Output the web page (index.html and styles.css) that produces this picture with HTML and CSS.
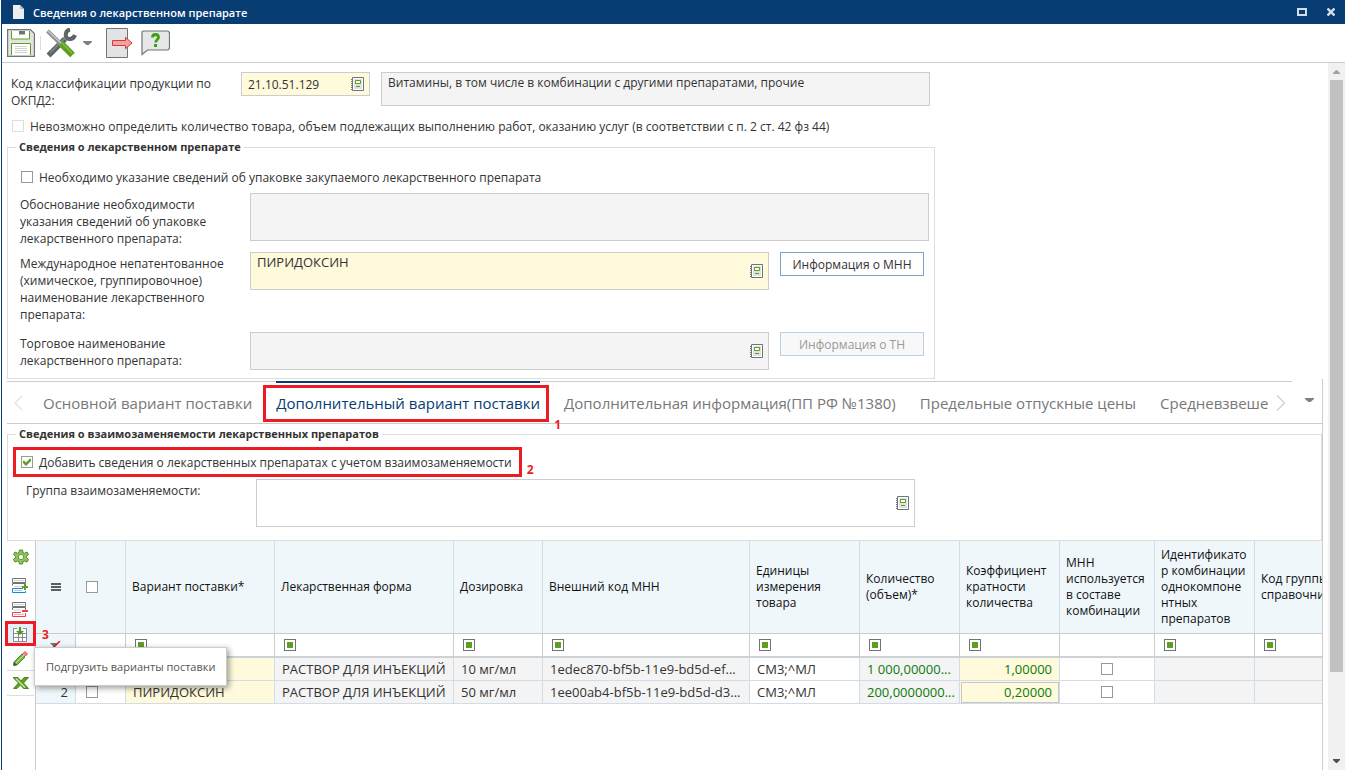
FILE: index.html
```
<!DOCTYPE html>
<html lang="ru">
<head>
    <meta charset="UTF-8">
    <meta name="viewport" content="width=device-width, initial-scale=1.0">
    <title>Сведения о лекарственном препарате</title>
    <link rel="stylesheet" href="styles.css">
</head>
<body>
    <!-- Общие иконки -->
    <svg class="sprite" aria-hidden="true">
        <symbol id="icon-book" viewBox="0 0 13 14">
            <path d="M1.500 .5h11v13h-11z" fill="#fff" stroke="#6f7477"/>
            <path d="M3 2h8v10H3z" fill="#dfe1e2"/>
            <path d="M4.500 3.500h5v3h-5z" fill="#fff" stroke="#5f9f20"/>
            <path d="M5 9.500h4" stroke="#5f9f20"/>
            <path d="M0 2.500h1M0 4.500h1M0 6.500h1M0 8.500h1M0 10.500h1M0 12.500h1" stroke="#6f7477"/>
        </symbol>
        <symbol id="icon-caret" viewBox="0 0 9 4">
            <path d="M0 0h9v1L5.500 4h-2L0 1z" fill="#7d7f81"/>
        </symbol>
    </svg>

    <div class="window">
        <header class="title-bar">
            <svg class="title-icon" width="11" height="14" viewBox="0 0 11 14"><path d="M0 0h7l4 4v10H0z" fill="#eceef0"/><path d="M7 0v4h4z" fill="#b4bcc4"/></svg>
            <h1>Сведения о лекарственном препарате</h1>
            <button class="title-button" type="button" aria-label="Развернуть"><svg width="10" height="8" viewBox="0 0 10 8"><path d="M1 1h8v6H1z" fill="none" stroke="#d3dde7" stroke-width="2"/></svg></button>
            <button class="title-button" type="button" aria-label="Закрыть"><svg width="8" height="8" viewBox="0 0 8 8"><path d="M.5 .5l7 7M7.500 .5l-7 7" stroke="#d3dde7" stroke-width="2.400"/></svg></button>
        </header>

        <div class="toolbar">
            <button type="button" aria-label="Сохранить">
                <svg width="28" height="28" viewBox="0 0 28 28">
                    <path d="M.6 .6h22.800l4 4v22.800H.6z" fill="#e2e3e4" stroke="#6f7477" stroke-width="1.200"/>
                    <path d="M4.500 2v8h18V2" fill="#fff" stroke="#5f9f20"/>
                    <path d="M12 2h6v3.500h-6z" fill="#6f7477"/>
                    <path d="M4.500 26V14.500h19V26" fill="#fff" stroke="#5f9f20"/>
                    <path d="M8 17.500h12M8 19.500h12M8 21.500h12M8 23.500h12" stroke="#cfd1d2"/>
                </svg>
            </button>
            <span class="toolbar-separator"></span>
            <button class="tools-button" type="button" aria-label="Операции">
                <svg width="31" height="30" viewBox="0 0 31 30" fill="none">
                    <path d="M2.500 27.500L19 11" stroke="#5f6466" stroke-width="5.500"/>
                    <path d="M24 1.500c-5 1-6 9-1 9.500 3 .3 5-1 6-4" stroke="#5f6466" stroke-width="4"/>
                    <path d="M4 25L19 10" stroke="#84888a" stroke-width="1.500"/>
                    <path d="M1.500 3L16 17" stroke="#8c9092" stroke-width="4"/>
                    <path d="M2 3L15 15" stroke="#c5c8c9" stroke-width="1.500"/>
                    <path d="M15 15.500L26.500 27" stroke="#5f9f20" stroke-width="6.500"/>
                    <path d="M16 15l10 10" stroke="#83bd48" stroke-width="1.500"/>
                </svg>
                <svg width="9" height="4"><use href="#icon-caret"/></svg>
            </button>
            <button type="button" aria-label="Выход">
                <svg width="27" height="30" viewBox="0 0 27 30">
                    <path d="M.5 .5h21v29H.5z" fill="#e2e3e4" stroke="#6f7477"/>
                    <path d="M6.500 12.500h13V9.300L26 15l-6.500 5.700v-3.200h-13z" fill="#f4a1a1" stroke="#d5393c"/>
                </svg>
            </button>
            <button type="button" aria-label="Справка">
                <svg width="29" height="26" viewBox="0 0 29 26">
                    <path d="M2 1h25l1.500 1.500v16L27 20H6.500L1 24.500V2z" fill="#e6e7e8" stroke="#6f7477" stroke-width="1.200"/>
                    <path d="M11.500 7.500c0-4 6-4 6 0 0 2-2.800 2-2.800 5" fill="none" stroke="#3fa012" stroke-width="2.800"/>
                    <path d="M13 14h3v3h-3z" fill="#3fa012"/>
                </svg>
            </button>
        </div>

        <div class="body">
            <main class="content">
                <div class="okpd-row">
                    <label class="form-label" for="okpd">Код классификации продукции по ОКПД2:</label>
                    <div class="field field-required okpd-code">
                        <input type="text" id="okpd" value="21.10.51.129">
                        <button class="lookup" type="button" aria-label="Выбрать код"><svg width="13" height="14"><use href="#icon-book"/></svg></button>
                    </div>
                    <textarea class="field field-readonly okpd-name" aria-label="Наименование ОКПД2" readonly>Витамины, в том числе в комбинации с другими препаратами, прочие</textarea>
                </div>

                <label class="check-row check-disabled"><input type="checkbox" disabled>Невозможно определить количество товара, объем подлежащих выполнению работ, оказанию услуг (в соответствии с п. 2 ст. 42 фз 44)</label>

                <fieldset class="drug">
                    <legend>Сведения о лекарственном препарате</legend>
                    <label class="check-row"><input type="checkbox">Необходимо указание сведений об упаковке закупаемого лекарственного препарата</label>
                    <div class="form-row">
                        <label class="form-label" for="reason">Обоснование необходимости указания сведений об упаковке лекарственного препарата:</label>
                        <textarea class="field field-readonly tall" id="reason" readonly></textarea>
                    </div>
                    <div class="form-row">
                        <label class="form-label" for="mnn">Международное непатентованное (химическое, группировочное) наименование лекарственного препарата:</label>
                        <div class="field field-required">
                            <textarea class="value" id="mnn">ПИРИДОКСИН</textarea>
                            <button class="lookup" type="button" aria-label="Выбрать МНН"><svg width="13" height="14"><use href="#icon-book"/></svg></button>
                        </div>
                        <button class="info-button" type="button">Информация о МНН</button>
                    </div>
                    <div class="form-row">
                        <label class="form-label" for="trade">Торговое наименование лекарственного препарата:</label>
                        <div class="field field-readonly">
                            <textarea class="value" id="trade" readonly></textarea>
                            <button class="lookup" type="button" aria-label="Выбрать ТН"><svg width="13" height="14"><use href="#icon-book"/></svg></button>
                        </div>
                        <button class="info-button" type="button" disabled>Информация о ТН</button>
                    </div>
                </fieldset>

                <section class="tab-panel">
                    <nav class="tabs">
                        <div class="tabs-scroller">
                            <button class="tab-arrow" type="button" aria-label="Назад"><svg width="10" height="16" viewBox="0 0 10 16"><path d="M8.500 .5L1 8l7.500 7.500" fill="none" stroke="#e3e3e3" stroke-width="1.300"/></svg></button>
                            <div class="tab-list">
                                <a href="#main">Основной вариант поставки</a>
                                <a class="active" href="#extra">Дополнительный вариант поставки<span class="mark">1</span></a>
                                <a href="#info">Дополнительная информация(ПП РФ №1380)</a>
                                <a href="#limit">Предельные отпускные цены</a>
                                <a href="#average">Средневзвешенные цены</a>
                            </div>
                            <button class="tab-arrow" type="button" aria-label="Вперед"><svg width="10" height="16" viewBox="0 0 10 16"><path d="M1 .5L8.500 8 1 15.500" fill="none" stroke="#cfcfcf" stroke-width="1.300"/></svg></button>
                        </div>
                        <button class="tab-menu" type="button" aria-label="Все вкладки"><svg width="9" height="4"><use href="#icon-caret"/></svg></button>
                    </nav>

                    <fieldset class="replace">
                        <legend>Сведения о взаимозаменяемости лекарственных препаратов</legend>
                        <label class="check-row marked"><input type="checkbox" checked>Добавить сведения о лекарственных препаратах с учетом взаимозаменяемости<span class="mark">2</span></label>
                        <div class="form-row">
                            <label class="form-label" for="group">Группа взаимозаменяемости:</label>
                            <div class="field tall">
                                <textarea id="group"></textarea>
                                <button class="lookup" type="button" aria-label="Выбрать группу"><svg width="13" height="14"><use href="#icon-book"/></svg></button>
                            </div>
                        </div>
                    </fieldset>

                    <div class="grid">
                        <div class="side-bar">
                            <button class="settings" type="button" aria-label="Настройки">
                                <svg width="16" height="16" viewBox="0 0 16 16"><path d="M6.500 1h3l.5 2.500 1.500.7L14 3l1.500 2.500L13.500 7.300v1.400l2 1.800L14 13l-2.500-1-1.500.7-.5 2.300h-3L6 12.700 4.500 12 2 13 .5 10.500l2-1.800V7.300l-2-1.800L2 3l2.500 1.200L6 3.500z" fill="#8fc163" stroke="#4f9022"/><circle cx="8" cy="8" r="2.700" fill="#fff" stroke="#5f9f20"/></svg>
                            </button>
                            <button type="button" aria-label="Добавить строку">
                                <svg width="17" height="16" viewBox="0 0 17 16"><path d="M.5 .5h13v4H.5zM.5 7.500v-2h13v2" fill="#fff" stroke="#6f7477"/><path d="M2 2.500h10M2 8.500h8" stroke="#cfd1d2"/><path d="M11 10.500H.5v4h13V13" fill="#fff" stroke="#1f87d0"/><path d="M2 12.500h8" stroke="#9dccf0"/><path d="M10 9h6M13 6v6" stroke="#5f9f20" stroke-width="2"/></svg>
                            </button>
                            <button type="button" aria-label="Удалить строку">
                                <svg width="17" height="16" viewBox="0 0 17 16"><path d="M.5 .5h13v4H.5zM.5 8v-2.500h13V8" fill="#fff" stroke="#6f7477"/><path d="M2 2.500h10M2 8h7" stroke="#cfd1d2"/><path d="M9 10.500H.5v4h13V11" fill="#fff" stroke="#ee4050"/><path d="M2 12.500h10" stroke="#f7a9b0"/><path d="M10 9h6" stroke="#ee4050" stroke-width="2"/></svg>
                            </button>
                            <button class="load" type="button" aria-label="Подгрузить">
                                <svg width="15" height="15" viewBox="0 0 15 15"><path d="M.5 1.500h13v13H.5zM.5 6.500h13M.5 10.500h13M5.500 6v8M9.500 6v8" fill="#fff" stroke="#858a8d"/><path d="M4 0h6v5H4z" fill="#e6eef8"/><path d="M7 0v6" stroke="#4f9a14" stroke-width="2"/><path d="M3 4l4 4 4-4z" fill="#4f9a14"/></svg>
                                <span class="mark">3</span>
                                <span class="tooltip" role="tooltip">Подгрузить варианты поставки</span>
                            </button>
                            <button class="group-end" type="button" aria-label="Изменить">
                                <svg width="15" height="15" viewBox="0 0 15 15"><path d="M1 11l8-8 3 3-8 8-3.500.5z" fill="#7fb84a" stroke="#4d8a1d"/><path d="M.5 14.500l.5-3.500 3 3z" fill="#4b4f51"/><path d="M3 12l8-8" stroke="#c3e29f"/><path d="M10 2.500l2-2 2.500 2.500-2 2z" fill="#ef8d93" stroke="#dc4b52"/></svg>
                            </button>
                            <button class="group-end" type="button" aria-label="Экспорт в Excel">
                                <svg width="16" height="12" viewBox="0 0 16 12"><path d="M0 .5h5l3 3.500 3-3.500h4.500L10.500 6l5 5.500h-5L7.500 8l-3.500 3.500H.5L5.500 6z" fill="#5f9f20" stroke="#4d8a1d"/><path d="M3 1.500l9 9" stroke="#c6e6a5" stroke-width="1.500"/></svg>
                            </button>
                        </div>

                        <div class="table-wrap">
                            <table>
                                <colgroup>
                                    <col class="c-num"><col class="c-check"><col class="c-variant"><col class="c-form"><col class="c-dose"><col class="c-code"><col class="c-unit"><col class="c-std"><col class="c-std"><col class="c-used"><col class="c-std"><col class="c-std">
                                </colgroup>
                                <thead>
                                    <tr>
                                        <th class="center"><svg width="10" height="8" viewBox="0 0 10 8"><path d="M0 1h10M0 4h10M0 7h10" stroke="#5b5f61" stroke-width="2"/></svg></th>
                                        <th class="pick"><input type="checkbox" aria-label="Выбрать все"></th>
                                        <th>Вариант поставки*</th>
                                        <th>Лекарственная форма</th>
                                        <th>Дозировка</th>
                                        <th>Внешний код МНН</th>
                                        <th>Единицы измерения товара</th>
                                        <th>Количество (объем)*</th>
                                        <th>Коэффициент кратности количества</th>
                                        <th>МНН используется в составе комбинации</th>
                                        <th>Идентификатор комбинации однокомпонентных препаратов</th>
                                        <th>Код группы справочника</th>
                                    </tr>
                                    <tr class="filters">
                                        <td class="num center"><svg width="11" height="9" viewBox="0 0 11 9"><path d="M0 2h8L5 5v4H3V5z" fill="#6f7477"/><path d="M10 0L2 8" stroke="#e8141c" stroke-width="1.500"/></svg></td>
                                        <td></td>
                                        <td><button type="button" aria-label="Фильтр"></button></td>
                                        <td><button type="button" aria-label="Фильтр"></button></td>
                                        <td><button type="button" aria-label="Фильтр"></button></td>
                                        <td><button type="button" aria-label="Фильтр"></button></td>
                                        <td><button type="button" aria-label="Фильтр"></button></td>
                                        <td><button type="button" aria-label="Фильтр"></button></td>
                                        <td><button type="button" aria-label="Фильтр"></button></td>
                                        <td></td>
                                        <td><button type="button" aria-label="Фильтр"></button></td>
                                        <td><button type="button" aria-label="Фильтр"></button></td>
                                    </tr>
                                </thead>
                                <tbody>
                                    <tr>
                                        <td class="num"></td>
                                        <td class="pick"></td>
                                        <td class="edit"></td>
                                        <td class="locked">РАСТВОР ДЛЯ ИНЪЕКЦИЙ</td>
                                        <td class="locked">10 мг/мл</td>
                                        <td class="locked">1edec870-bf5b-11e9-bd5d-ef...</td>
                                        <td>СМ3;^МЛ</td>
                                        <td class="locked green">1 000,00000...</td>
                                        <td class="edit green right">1,00000</td>
                                        <td class="center"><input type="checkbox" aria-label="МНН в составе комбинации"></td>
                                        <td class="locked"></td>
                                        <td class="locked"></td>
                                    </tr>
                                    <tr>
                                        <td class="num">2</td>
                                        <td class="pick"><input type="checkbox" aria-label="Выбрать строку"></td>
                                        <td class="edit">ПИРИДОКСИН</td>
                                        <td class="locked">РАСТВОР ДЛЯ ИНЪЕКЦИЙ</td>
                                        <td class="locked">50 мг/мл</td>
                                        <td class="locked">1ee00ab4-bf5b-11e9-bd5d-d3...</td>
                                        <td>СМ3;^МЛ</td>
                                        <td class="locked green">200,0000000...</td>
                                        <td class="edit green right current">0,20000</td>
                                        <td class="center"><input type="checkbox" aria-label="МНН в составе комбинации"></td>
                                        <td class="locked"></td>
                                        <td class="locked"></td>
                                    </tr>
                                </tbody>
                            </table>
                        </div>
                    </div>
                </section>
            </main>

            <div class="scrollbar">
                <svg width="7" height="4" viewBox="0 0 7 4"><path d="M0 4v-1L3 0h1l3 3v1z" fill="#a3a3a3"/></svg>
                <div class="scroll-track"><div class="scroll-thumb"></div></div>
                <svg width="7" height="4" viewBox="0 0 7 4"><path d="M0 0v1l3 3h1l3-3V0z" fill="#505050"/></svg>
            </div>
        </div>
    </div>
</body>
</html>
```
FILE: styles.css
```
* {
    box-sizing: border-box;
}

body {
    margin: 0;
    font-family: "Open Sans", "Noto Sans", sans-serif;
    font-size: 12px;
    line-height: 17px;
    color: #333;
    background-color: #fff;
}

button,
input,
textarea {
    font: inherit;
    color: inherit;
}

button {
    padding: 0;
    border: 0;
    background: none;
    cursor: pointer;
}

svg {
    display: block;
}

.sprite {
    display: none;
}

.window {
    display: flex;
    flex-direction: column;
    height: 100vh;
    border-left: 1px solid #083d73;
    margin-left: 1px;
    overflow: hidden;
}

/* Title bar */
.title-bar {
    display: flex;
    align-items: center;
    height: 24px;
    flex: none;
    padding: 0 10px 0 11px;
    background-color: #083d73;
    color: #fff;
}

.title-bar h1 {
    flex: 1;
    margin: 0 0 0 9px;
    font-size: 11px;
    font-weight: 600;
}

.title-button {
    margin-left: 20px;
}

/* Toolbar */
.toolbar {
    display: flex;
    align-items: center;
    flex: none;
    height: 39px;
    padding: 0 5px;
    border-bottom: 1px solid #ccc;
}

.toolbar-separator {
    width: 1px;
    height: 14px;
    margin: 0 5px;
    background-color: #ddd;
}

.tools-button {
    display: flex;
    align-items: center;
    gap: 6px;
    margin-right: 14px;
}

.toolbar button:last-child {
    margin-left: 8px;
}

/* Body */
.body {
    display: flex;
    flex: 1;
    min-height: 0;
}

.content {
    display: flex;
    flex-direction: column;
    flex: 1;
    min-width: 0;
    padding: 9px 5px 0;
    overflow: hidden;
}

.form-label {
    flex: none;
    width: 230px;
    padding: 3px 12px 0 0;
}

.field {
    display: flex;
    align-items: center;
    margin: 0;
    border: 1px solid #ccc;
    border-radius: 0;
    background-color: #fff;
    resize: none;
}

.field input,
.field textarea {
    flex: 1;
    min-width: 0;
    align-self: stretch;
    border: 0;
    background: none;
    outline: none;
    resize: none;
}

.field input,
.field textarea,
textarea.field {
    padding: 1px 6px;
    overflow: hidden;
}

.field .value {
    font-size: 13px;
}

.field-required {
    background-color: #fffadb;
}

.field-readonly {
    background-color: #f4f4f4;
}

.tall {
    height: 48px;
}

.lookup {
    flex: none;
    padding: 0 5px;
}

.okpd-row {
    display: flex;
    align-items: flex-start;
    max-width: 923px;
    padding-left: 4px;
}

.okpd-code {
    width: 129px;
    height: 24px;
    margin-right: 11px;
}

.okpd-name {
    flex: 1;
    height: 34px;
}

.check-row {
    position: relative;
    display: flex;
    align-items: center;
    gap: 6px;
    width: fit-content;
    height: 18px;
}

.check-disabled {
    margin: 8px 0 4px 5px;
}

input[type="checkbox"] {
    appearance: none;
    flex: none;
    display: block;
    width: 12px;
    height: 12px;
    margin: 0;
    border: 1px solid #999;
    background-color: #fff;
}

input[type="checkbox"]:disabled {
    border-color: #ddd;
}

input[type="checkbox"]:checked::before {
    content: "";
    display: block;
    width: 10px;
    height: 10px;
    background-color: #5f9f20;
    clip-path: polygon(10% 40%, 20% 35%, 40% 55%, 80% 15%, 90% 20%, 90% 40%, 40% 90%, 10% 60%);
}

/* Fieldsets */
fieldset {
    min-width: 0;
    margin: 0;
    padding: 0 5px 8px 12px;
    border: 1px solid #ddd;
}

legend {
    height: 16px;
    margin-left: -4px;
    padding: 0 3px;
    font-size: 11px;
    font-weight: bold;
    line-height: 16px;
}

.drug {
    max-width: 928px;
}

.drug .check-row {
    margin: 13px 0 7px 1px;
}

.form-row {
    display: flex;
    align-items: flex-start;
    margin-bottom: 9px;
}

.drug .form-row .field {
    flex: 1;
    height: 38px;
}

.drug .form-row .tall {
    height: 48px;
}

.drug .check-row + .form-row {
    margin-bottom: 5px;
}

.drug .form-row:last-child {
    margin-bottom: 0;
}

.info-button {
    flex: none;
    width: 144px;
    height: 24px;
    margin: 0 5px 0 11px;
    border: 1px solid #7ba1cc;
    background-color: #fff;
}

.info-button:disabled {
    border-color: #bdd0e5;
    background-color: #f8f8f8;
    color: #999;
}

/* Tabs */
.tab-panel {
    display: flex;
    flex-direction: column;
    flex: 1;
    min-height: 0;
    padding-top: 2px;
    border-right: 1px solid #ccc;
}

.tabs {
    display: flex;
    flex: none;
    height: 43px;
    border-bottom: 1px solid #ccc;
}

.tabs-scroller {
    display: flex;
    align-items: center;
    flex: 1;
    min-width: 0;
    padding: 0 6px 0 7px;
    border-top: 1px solid #ccc;
}

.tab-list {
    display: flex;
    flex: 1;
    gap: 24px;
    min-width: 0;
    height: 43px;
    margin: -1px 7px 0 0;
    padding-left: 19px;
    overflow-x: clip;
    overflow-y: visible;
}

.tab-list a {
    position: relative;
    border-top: 2px solid transparent;
    color: #777;
    font-size: 15px;
    line-height: 40px;
    text-decoration: none;
    white-space: nowrap;
}

.tab-list .active {
    border-top-color: #083d73;
    color: #083d73;
}

.tab-menu {
    margin: 0 8px 4px 13px;
}

/* Callout frames and numbers */
.tab-list .active::after,
.marked::after,
.load::after {
    content: "";
    position: absolute;
    border: 3px solid #ed1c24;
    pointer-events: none;
}

.tab-list .active::after {
    inset: 2px -9px 2px -13px;
}

.marked::after {
    inset: -6px -10px -6px -8px;
}

.load::after {
    inset: -1px -2px 0 -2px;
}

.mark {
    position: absolute;
    color: #ed1c24;
    font-size: 12px;
    font-weight: bold;
    line-height: 14px;
}

.active .mark {
    right: -21px;
    bottom: -8px;
}

.marked .mark {
    right: -22px;
    bottom: -6px;
}

.load .mark {
    left: 35px;
    top: 6px;
}

.replace {
    margin: 2px 0 0;
    padding-bottom: 4px;
}

.replace .check-row {
    margin: 11px 0 8px 1px;
}

.replace .form-label {
    padding-left: 6px;
    width: 236px;
}

.replace .field {
    width: 659px;
}

/* Grid */
.grid {
    display: flex;
    flex: 1;
    min-height: 0;
}

.side-bar {
    flex: none;
    width: 29px;
    padding: 4px 1px 0 0;
    border-right: 1px solid #ccc;
}

.side-bar button {
    position: relative;
    display: flex;
    align-items: center;
    justify-content: center;
    width: 27px;
    height: 24px;
}

.side-bar .settings {
    margin-bottom: 5px;
}

.side-bar .load {
    z-index: 1;
    background-color: #e6eef8;
}

.side-bar .group-end {
    height: 25px;
    border-bottom: 1px solid #ddd;
}

.tooltip {
    position: absolute;
    left: 27px;
    top: 25px;
    width: max-content;
    padding: 10px 11px;
    border: 1px solid #ccc;
    background-color: #fff;
    box-shadow: 2px 2px 6px rgba(0, 0, 0, 0.4);
    color: #555;
    font-size: 11px;
}

.table-wrap {
    flex: 1;
    min-width: 0;
    overflow: hidden;
}

table {
    width: 1319px;
    table-layout: fixed;
    border-collapse: separate;
    border-spacing: 0;
}

.c-num { width: 40px; }
.c-check { width: 50px; }
.c-variant { width: 149px; }
.c-form { width: 179px; }
.c-dose { width: 89px; }
.c-code { width: 207px; }
.c-unit { width: 110px; }
.c-std { width: 100px; }
.c-used { width: 95px; }

th {
    height: 93px;
    padding: 0 6px;
    border-right: 1px solid #d0dce8;
    border-bottom: 1px solid #ccc;
    background-color: #eff7fb;
    color: #111;
    font-weight: normal;
    line-height: 16px;
    text-align: left;
    overflow-wrap: break-word;
}

td {
    height: 23px;
    padding: 0 7px;
    border-right: 1px solid #d0dce8;
    border-bottom: 1px solid #d0dce8;
    font-size: 13px;
    white-space: nowrap;
}

.filters td {
    height: 24px;
    border-right-color: #ccc;
    border-bottom: 2px solid #ccd2d6;
}

.filters button {
    display: block;
    width: 12px;
    height: 12px;
    margin-left: 2px;
    border: 1px solid #6f7477;
    background-color: #5f9f20;
    box-shadow: inset 0 0 0 2px #fff;
}

.num,
.filters .num {
    background-color: #eff7fb;
    text-align: right;
}

.locked {
    background-color: #f4f4f4;
}

.edit {
    background-color: #fffadb;
}

.green {
    color: #0a7a0a;
}

.right {
    text-align: right;
}

.current {
    outline: 1px solid #c4c8cc;
    outline-offset: -2px;
}

.pick {
    padding-left: 10px;
}

.center svg,
.center input[type="checkbox"] {
    margin: 0 auto;
}

/* Scrollbar */
.scrollbar {
    display: flex;
    flex-direction: column;
    align-items: center;
    flex: none;
    width: 17px;
    padding: 7px 0;
    background-color: #f1f1f1;
}

.scroll-track {
    flex: 1;
    width: 13px;
    margin: 6px 0;
}

.scroll-thumb {
    height: 88%;
    background-color: #c1c1c1;
}
```
